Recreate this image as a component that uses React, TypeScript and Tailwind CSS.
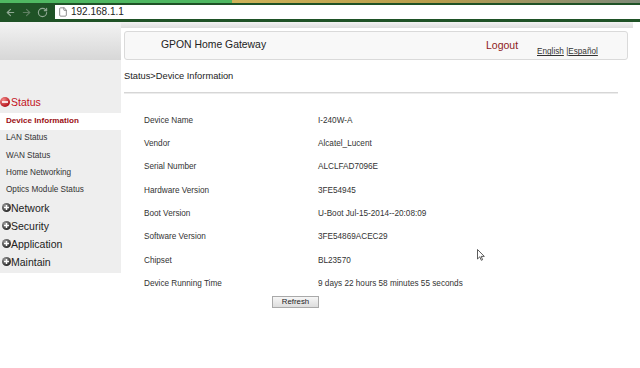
import { ArrowLeft, ArrowRight, RotateCw, File } from "lucide-react";

const details: [string, string][] = [
  ["Device Name", "I-240W-A"],
  ["Vendor", "Alcatel_Lucent"],
  ["Serial Number", "ALCLFAD7096E"],
  ["Hardware Version", "3FE54945"],
  ["Boot Version", "U-Boot Jul-15-2014--20:08:09"],
  ["Software Version", "3FE54869ACEC29"],
  ["Chipset", "BL23570"],
  ["Device Running Time", "9 days 22 hours 58 minutes 55 seconds"],
];

const statusItems = ["LAN Status", "WAN Status", "Home Networking", "Optics Module Status"];
const menuGroups = ["Network", "Security", "Application", "Maintain"];

const MinusBall = () => (
  <svg width="10" height="10" viewBox="0 0 10 10" className="shrink-0">
    <defs>
      <radialGradient id="rb" cx="35%" cy="30%" r="70%">
        <stop offset="0%" stopColor="#f58a8a" />
        <stop offset="100%" stopColor="#b3121a" />
      </radialGradient>
    </defs>
    <circle cx="5" cy="5" r="5" fill="url(#rb)" />
    <rect x="2" y="4.2" width="6" height="1.6" fill="#fff" />
  </svg>
);

const PlusBall = () => (
  <svg width="9" height="9" viewBox="0 0 10 10" className="shrink-0">
    <defs>
      <radialGradient id="gb" cx="35%" cy="30%" r="70%">
        <stop offset="0%" stopColor="#9a9a9a" />
        <stop offset="100%" stopColor="#2a2a2a" />
      </radialGradient>
    </defs>
    <circle cx="5" cy="5" r="5" fill="url(#gb)" />
    <rect x="2.2" y="4.2" width="5.6" height="1.6" fill="#fff" />
    <rect x="4.2" y="2.2" width="1.6" height="5.6" fill="#fff" />
  </svg>
);

export default function App() {
  return (
    <div className="relative h-[368px] w-[640px] overflow-hidden bg-white font-['Liberation_Sans',Arial,sans-serif]">
      {/* browser chrome */}
      <div className="flex h-[3px]">
        <div className="w-[232px] bg-[#4fb862]" />
        <div className="flex-1 bg-gradient-to-r from-[#cfb35a] via-[#b89d4c] to-[#7f8a78]" />
      </div>
      <div className="flex h-[19px] items-start bg-[#1f5226] pt-[2px]">
        <div className="flex h-[14px] w-[55px] items-center gap-[5px] pl-[5px] text-[#8fa893]">
          <ArrowLeft size={11} strokeWidth={2.5} />
          <ArrowRight size={11} strokeWidth={2.5} className="text-[#5f7f63]" />
          <RotateCw size={11} strokeWidth={2.5} />
        </div>
        <div className="flex h-[14px] flex-1 items-center gap-[3px] bg-white pl-[3px]">
          <File size={10} className="text-[#777]" />
          <span className="text-[10px] leading-none text-[#222]">192.168.1.1</span>
        </div>
      </div>

      <div className="flex">
        {/* sidebar */}
        <div className="flex w-[121px] flex-col">
          <div className="h-[38px] bg-gradient-to-b from-[#f3f3f3] to-[#d7d7d7]" />
          <div className="flex flex-col bg-[#eeeeee] pb-[2px] pt-[33.5px]">
            <div className="flex h-[19px] items-center pb-[2px]">
              <MinusBall />
              <span className="ml-[1px] text-[10.5px] leading-none text-[#c3121b]">Status</span>
            </div>
            <div className="flex h-[17.3px] items-center bg-white pl-[6px] text-[8.1px] font-bold leading-none text-[#9b0f14]">
              Device Information
            </div>
            {statusItems.map((s) => (
              <div key={s} className="flex h-[17.3px] items-center pl-[6px] text-[8.2px] leading-none text-[#333]">
                {s}
              </div>
            ))}
            {menuGroups.map((g) => (
              <div key={g} className="flex h-[18px] items-center pl-[2px]">
                <PlusBall />
                <span className="text-[10.5px] leading-none text-[#222]">{g}</span>
              </div>
            ))}
          </div>
        </div>

        {/* content */}
        <div className="flex flex-1 flex-col">
          <div className="mr-[7px] h-[6px] bg-gradient-to-b from-[#f2f2f2] to-[#dedede]" />
          <div className="ml-[3px] mt-[3px] flex h-[29px] w-[504px] items-center rounded-[3px] border border-[#dadada] bg-[#f8f8f8]">
            <span className="ml-[36px] w-[325px] text-[10.4px] leading-none text-[#222]">GPON Home Gateway</span>
            <span className="w-[51px] text-[10.5px] leading-none text-[#8e1b1b]">Logout</span>
            <span className="mt-[14px] text-[8.2px] leading-none text-[#333]">
              <span className="underline">English</span> |<span className="underline">Español</span>
            </span>
          </div>
          <div className="ml-[3px] flex h-[32px] items-center pt-[2px] text-[9.3px] leading-none text-[#222]">
            Status&gt;Device Information
          </div>
          <div className="ml-[3px] h-[2px] w-[494px] border-t border-[#d6d6d6] bg-[#ececec]" />
          <div className="mt-[15.35px] flex flex-col pl-[23px]">
            {details.map(([k, v]) => (
              <div key={k} className="flex h-[23.3px] items-center text-[8.2px] leading-none text-[#333]">
                <span className="w-[174px]">{k}</span>
                <span>{v}</span>
              </div>
            ))}
          </div>
          <div className="ml-[151px]">
            <button className="flex h-[12px] w-[47px] items-center justify-center border border-[#a9a9a9] bg-gradient-to-b from-[#f6f6f6] to-[#dddddd] text-[7.8px] leading-none text-[#222]">
              Refresh
            </button>
          </div>
        </div>
      </div>

      {/* mouse pointer */}
      <svg className="absolute left-[477px] top-[249px]" width="8" height="12" viewBox="0 0 8 12">
        <path d="M0.5 0.5 L0.5 10 L2.8 7.8 L4.3 11.3 L5.6 10.7 L4.2 7.4 L7.3 7.4 Z" fill="#fff" stroke="#333" strokeWidth="0.8" />
      </svg>
    </div>
  );
}
